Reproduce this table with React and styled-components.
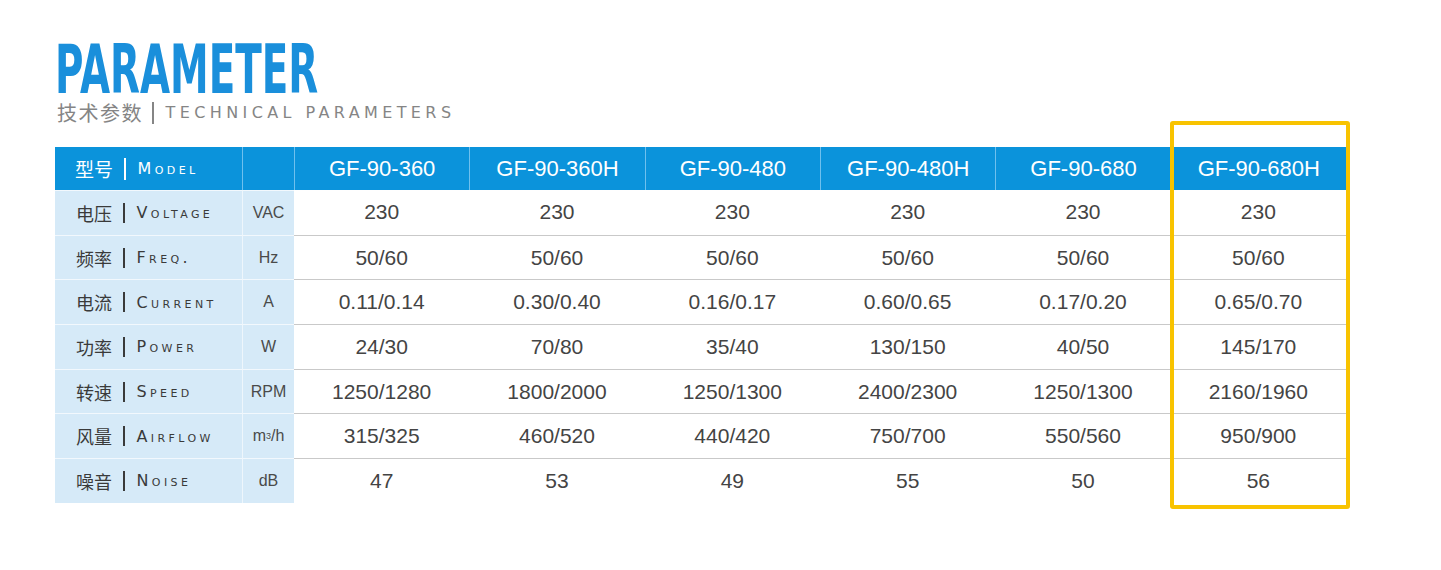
import React from "react";
import styled, { createGlobalStyle } from "styled-components";

const Global = createGlobalStyle`
  body {
    margin: 0;
    background: #fff;
    font-family: "Liberation Sans", "Noto Sans CJK SC", sans-serif;
  }
`

const Page = styled.div`
  width: 1441px;
  height: 570px;
  padding: 41px 0 0 55px;
  box-sizing: border-box;
`
const Title = styled.h1`
  margin: 0;
  height: 59px;
  font-family: "DejaVu Sans", sans-serif;
  font-weight: bold;
  font-size: 67px;
  line-height: 59px;
  color: #1a8fdb;
  transform: scaleX(0.58);
  transform-origin: left top;
  white-space: nowrap;
`
const Subtitle = styled.div`
  display: flex;
  align-items: center;
  color: #858585;
  height: 26px;
  margin-left: 2px;
`
const SubCn = styled.span`
  font-family: "Noto Sans CJK SC", sans-serif;
  font-size: 20px;
  line-height: 26px;
  letter-spacing: 1.5px;
`
const Bar = styled.span`
  display: inline-block;
  flex-shrink: 0;
  width: 1.5px;
  height: ${(p) => p.h || 20}px;
  background: ${(p) => p.color || "#858585"};
  margin: 0 ${(p) => p.gap || 11}px 0 ${(p) => p.gapL || 9}px;
`
const SubEn = styled.span`
  font-family: "DejaVu Sans", sans-serif;
  font-size: 16px;
  line-height: 26px;
  letter-spacing: 4.4px;
`

const TableWrap = styled.div`
  position: relative;
  margin-top: 21px;
  width: 1291px;
`
const Grid = styled.div`
  display: grid;
  grid-template-columns: 187px 52px repeat(6, 1fr);
  grid-template-rows: 43px repeat(7, 44.7px);
`
const Head = styled.div`
  background: #0b93db;
  color: #fff;
  display: flex;
  align-items: center;
  justify-content: center;
  font-family: "Liberation Sans", sans-serif;
  font-size: 22px;
  border-left: 1px solid #6fc0ee;
  &:first-child {
    border-left: none;
    justify-content: flex-start;
    padding-left: 20px;
  }
`
const Label = styled.div`
  background: #d6eaf8;
  color: #3a3a3a;
  display: flex;
  align-items: center;
  padding-left: 21px;
  border-top: 1px solid #f2f8fd;
`
const Unit = styled.div`
  background: #d6eaf8;
  color: #4a4a4a;
  display: flex;
  align-items: center;
  justify-content: center;
  font-family: "Liberation Sans", sans-serif;
  font-size: 16px;
  border-top: 1px solid #f2f8fd;
  border-left: 1px solid #eef6fc;
  sup {
    font-size: 9px;
    line-height: 0;
    vertical-align: 7px;
  }
`
const Cell = styled.div`
  display: flex;
  align-items: center;
  justify-content: center;
  color: #444;
  font-family: "Liberation Sans", sans-serif;
  font-size: 21px;
  border-top: ${(p) => (p.first ? "none" : "1px solid #c9c9c9")};
`
const Cn = styled.span`
  font-family: "Noto Sans CJK SC", sans-serif;
  font-size: ${(p) => p.size || 18}px;
`
const En = styled.span`
  font-family: "DejaVu Sans", sans-serif;
  font-size: 16px;
  font-variant: small-caps;
  letter-spacing: 3.4px;
  color: ${(p) => p.color || "#3a3a3a"};
`
const Highlight = styled.div`
  position: absolute;
  left: 1115px;
  top: -26px;
  width: 180px;
  height: 388px;
  box-sizing: border-box;
  border: 4px solid #f8c300;
  border-radius: 3px;
  pointer-events: none;
`

const models = ["GF-90-360", "GF-90-360H", "GF-90-480", "GF-90-480H", "GF-90-680", "GF-90-680H"]

const rows = [
  { cn: "电压", en: "Voltage", unit: "VAC", vals: ["230", "230", "230", "230", "230", "230"] },
  { cn: "频率", en: "Freq.", unit: "Hz", vals: ["50/60", "50/60", "50/60", "50/60", "50/60", "50/60"] },
  { cn: "电流", en: "Current", unit: "A", vals: ["0.11/0.14", "0.30/0.40", "0.16/0.17", "0.60/0.65", "0.17/0.20", "0.65/0.70"] },
  { cn: "功率", en: "Power", unit: "W", vals: ["24/30", "70/80", "35/40", "130/150", "40/50", "145/170"] },
  { cn: "转速", en: "Speed", unit: "RPM", vals: ["1250/1280", "1800/2000", "1250/1300", "2400/2300", "1250/1300", "2160/1960"] },
  { cn: "风量", en: "Airflow", unit: <>m<sup>3</sup>/h</>, vals: ["315/325", "460/520", "440/420", "750/700", "550/560", "950/900"] },
  { cn: "噪音", en: "Noise", unit: "dB", vals: ["47", "53", "49", "55", "50", "56"] },
]

export default function App() {
  return (
    <Page>
      <Global />
      <Title>PARAMETER</Title>
      <Subtitle>
        <SubCn>技术参数</SubCn>
        <Bar h={22} gapL={9} gap={12} />
        <SubEn>TECHNICAL PARAMETERS</SubEn>
      </Subtitle>
      <TableWrap>
        <Grid>
          <Head>
            <Cn size={19}>型号</Cn>
            <Bar h={22} color="#fff" gapL={11} gap={12} />
            <En color="#fff">Model</En>
          </Head>
          <Head />
          {models.map((m) => (
            <Head key={m}>{m}</Head>
          ))}
          {rows.map((r, i) => (
            <React.Fragment key={r.cn}>
              <Label>
                <Cn>{r.cn}</Cn>
                <Bar h={20} color="#3a3a3a" gapL={11} gap={12} />
                <En>{r.en}</En>
              </Label>
              <Unit>{r.unit}</Unit>
              {r.vals.map((v, j) => (
                <Cell key={j} first={i === 0}>{v}</Cell>
              ))}
            </React.Fragment>
          ))}
        </Grid>
        <Highlight />
      </TableWrap>
    </Page>
  )
}
